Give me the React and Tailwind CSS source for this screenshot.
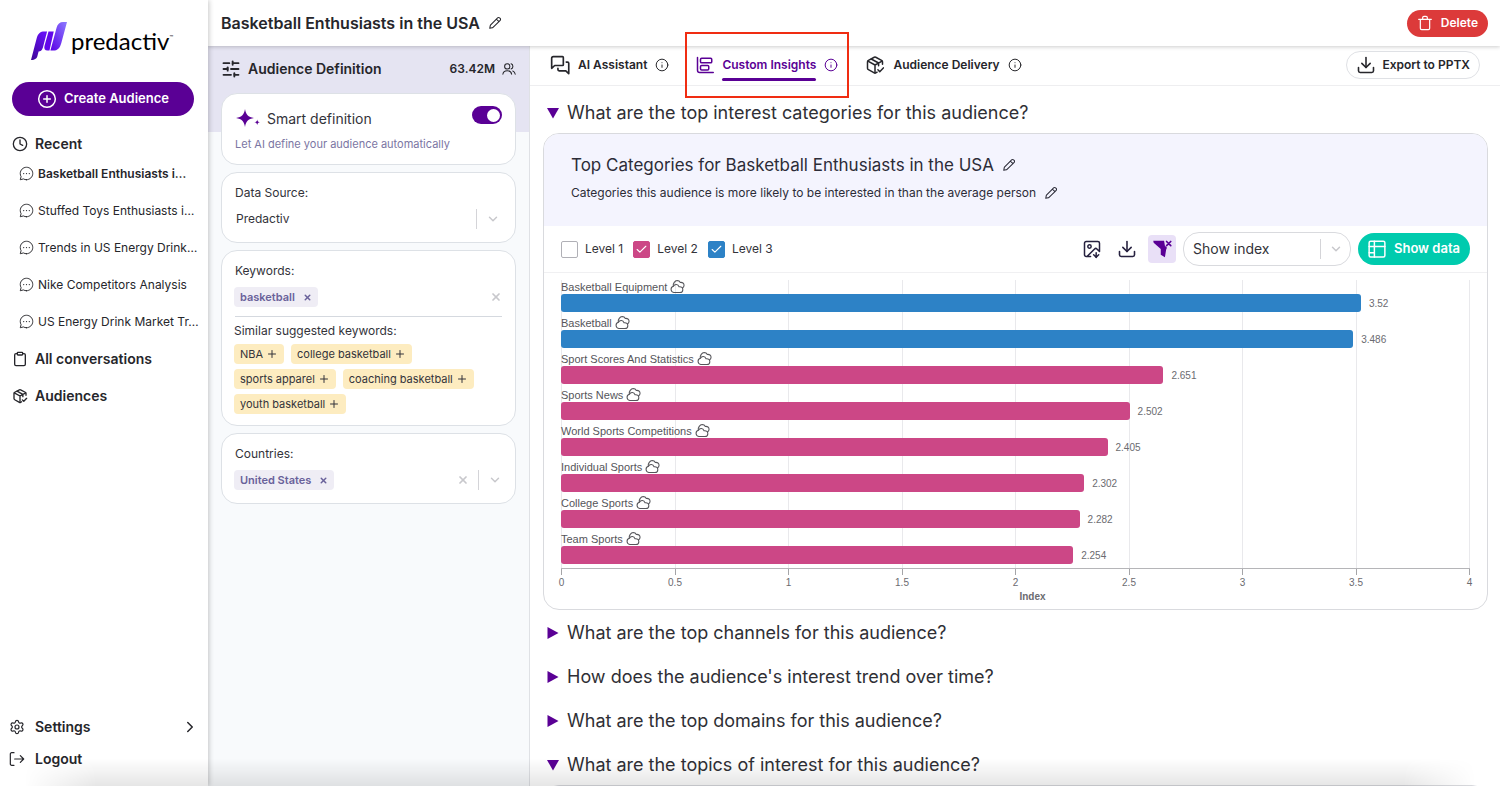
import { useState } from "react";
import {
  Clock, Clipboard, ChevronRight, ChevronDown, SlidersHorizontal, Info,
  Download, ImageDown, CirclePlus, Plus, X, Check, Settings,
} from "lucide-react";

function Svg({ className, children, sw = 1.5 }) {
  return (
    <svg viewBox="0 0 24 24" fill="none" stroke="currentColor" strokeWidth={sw} strokeLinecap="round" strokeLinejoin="round" className={className} aria-hidden="true">
      {children}
    </svg>
  );
}

const Pencil = ({ className }) => (
  <Svg className={className} sw={1.8}>
    <path d="M14.4 5.2l2-2a2.4 2.4 0 0 1 3.4 0l1 1a2.4 2.4 0 0 1 0 3.4l-2 2M14.4 5.2L4.6 15.4a3 3 0 0 0-.8 1.5L3 21l4.1-.8a3 3 0 0 0 1.5-.8L18.8 9.6M14.4 5.2l4.4 4.4" />
  </Svg>
);

const ChatBubble = ({ className }) => (
  <Svg className={className}>
    <path d="M12 22c5.523 0 10-4.477 10-10S17.523 2 12 2 2 6.477 2 12c0 1.821.487 3.53 1.338 5L2 22l5-1.338A9.955 9.955 0 0 0 12 22z" />
    <path d="M7.5 12h.01M12 12h.01M16.5 12h.01" strokeWidth="2" />
  </Svg>
);

const People = ({ className }) => (
  <Svg className={className} sw={1.8}>
    <circle cx="9" cy="7.500" r="4.500" />
    <path d="M1.500 21c.5-4 3.500-6 7.500-6s7 2 7.500 6M15.500 3.200a4.500 4.500 0 0 1 0 8.600M18.500 15.300c2.500 1 3.800 3 4.200 5.700" />
  </Svg>
);

const PackageCheck = ({ className, sw = 1.8 }) => (
  <Svg className={className} sw={sw}>
    <path d="M21 11V8.2a2 2 0 0 0-1.1-1.8l-7-3.7a2 2 0 0 0-1.8 0l-7 3.7A2 2 0 0 0 3 8.2v7.6a2 2 0 0 0 1.1 1.8l7 3.9a2 2 0 0 0 1.8 0l1.6-.9" />
    <path d="M3.5 7.3L12 12l8.5-4.7M12 12v9.5M7.5 4.8l8.8 4.8V13" />
    <path d="M15.5 17.8l2.2 2.2 4.3-4.5" />
  </Svg>
);

const Chats = ({ className }) => (
  <Svg className={className} sw={2}>
    <path d="M15 2H4a2 2 0 0 0-2 2v12l3.6-3.4H15a1 1 0 0 0 1-1V3a1 1 0 0 0-1-1z" />
    <path d="M19.5 8.5H21a1.5 1.5 0 0 1 1.5 1.5v12.5L19 19h-8a1.500 1.500 0 0 1-1.500-1.500V16" />
  </Svg>
);

const InsightBars = ({ className }) => (
  <Svg className={className} sw={2}>
    <path d="M2 2v17a3 3 0 0 0 3 3h18" />
    <rect x="6" y="3" width="15" height="6" rx="1.500" />
    <rect x="6" y="12.500" width="11" height="6" rx="1.500" />
  </Svg>
);

const LogoutIcon = ({ className }) => (
  <Svg className={className} sw={1.8}>
    <path d="M7.500 21.500H4a2 2 0 0 1-2-2v-15a2 2 0 0 1 2-2h3.500M8.500 12H22M17 7l5 5-5 5" />
  </Svg>
);

const Trash = ({ className }) => (
  <Svg className={className} sw={1.8}>
    <path d="M2.500 6.500h19M5 6.500V20a2 2 0 0 0 2 2h10a2 2 0 0 0 2-2V6.500M8.500 6V4a2 2 0 0 1 2-2h3a2 2 0 0 1 2 2v2" />
  </Svg>
);

const TableIcon = ({ className }) => (
  <Svg className={className} sw={2}>
    <rect x="1.500" y="1.500" width="21" height="21" rx="2" />
    <path d="M1.500 8.500h21M1.500 17h7M8.500 1.500v21" />
  </Svg>
);

const Clouds = ({ className }) => (
  <Svg className={className} sw={1.7}>
    <path d="M6 21.500a5 5 0 0 1-.5-9.800C7.500 7.500 13 8 14.500 12.500c4-.5 6 1.500 6 4.500s-2 4.500-4.500 4.500z" />
    <path d="M5.200 11.500C4.500 7 8 2.800 11.500 2.500c2.500 0 4 1 5 3 3.500-.5 6 1.500 6 4.500 0 2-1 3.500-2.500 4.500" />
  </Svg>
);

const FilterX = ({ className }) => (
  <svg viewBox="0 0 24 24" className={className} aria-hidden="true">
    <path d="M1.500 2H14.500L15.500 8L18 10.500L17 12.500L15.500 22L10.500 19V12L2 4.500Z" fill="currentColor" />
    <path d="M17.500 3l5 5M22.500 3l-5 5" stroke="currentColor" strokeWidth="2" strokeLinecap="round" />
  </svg>
);

const Sparkle = ({ className }) => (
  <svg viewBox="0 0 24 20" className={className} fill="currentColor" aria-hidden="true">
    <path d="M9 0c.9 5.500 3 8 9 9-6 1-8.100 3.500-9 9-.9-5.500-3-8-9-9 6-1 8.100-3.500 9-9z" />
    <path d="M21.200 10.500c.3 1.800 1 2.500 2.800 2.800-1.800.3-2.500 1-2.800 2.800-.3-1.800-1-2.500-2.800-2.800 1.800-.3 2.500-1 2.800-2.800z" />
  </svg>
);

const Logo = () => (
  <a href="#home" className="mx-auto flex h-10 w-[146px] items-center gap-1 text-black">
    <svg viewBox="0 0 38 40" className="h-10 w-9 shrink-0" aria-hidden="true">
      <defs>
        <linearGradient id="markLeft" x1="0" y1="1" x2="0.6" y2="0">
          <stop offset="0" stopColor="#3d0596" />
          <stop offset="1" stopColor="#6610f2" />
        </linearGradient>
        <linearGradient id="markRight" x1="0" y1="1" x2="1" y2="0">
          <stop offset="0" stopColor="#5a00e6" />
          <stop offset="1" stopColor="#8d7cff" />
        </linearGradient>
      </defs>
      <path d="M0 40L6 17c1.500-5 4-7 8-7h3l-4.500 17c-1 3-2.500 4-4.500 4l-1 4c-.8 3.500-2.500 5-7 5z" fill="url(#markLeft)" />
      <path d="M18.500 10h5.500l-4.500 20h-2c-3 0-4-2-3.200-5z" fill="#6207ea" />
      <path d="M27 6c1-4 3.500-6 7-6h4l-6 22c-1.500 5.500-4 8-8.500 8h-3z" fill="url(#markRight)" />
    </svg>
    <span className="font-['Lato'] text-2xl leading-8 text-black">predactiv</span>
    <span className="-ml-1 mb-2 self-center text-[6px]">™</span>
  </a>
);

const recents = [
  "Basketball Enthusiasts i…",
  "Stuffed Toys Enthusiasts i…",
  "Trends in US Energy Drink…",
  "Nike Competitors Analysis",
  "US Energy Drink Market Tr…",
];

function Sidebar() {
  return (
    <aside className="z-20 flex w-52 shrink-0 flex-col bg-white pt-[21px] pb-[11px] shadow-[1px_0_5px_rgba(0,0,0,0.22)]">
      <Logo />
      <button className="mt-[21px] mr-[14px] ml-3 flex h-[34px] items-center justify-center gap-[7px] rounded-full bg-[#5a0095] text-[13px] font-semibold text-white">
        <CirclePlus className="size-5" strokeWidth={1.8} />
        Create Audience
      </button>
      <nav className="mt-[9px] flex flex-col text-[#26262b]">
        <h2 className="flex h-[37px] items-center gap-[7px] pl-3 text-sm font-semibold">
          <Clock className="size-4" strokeWidth={2} /> Recent
        </h2>
        {recents.map((r, i) => (
          <a key={r} href="#chat" className={`flex h-[37px] items-center gap-1 pb-[14px] pl-[19px] text-xs whitespace-nowrap ${i === 0 ? "font-semibold" : ""}`}>
            <ChatBubble className="size-[15px] shrink-0" />
            {r}
          </a>
        ))}
        <a href="#conversations" className="-mt-[7px] flex h-[37px] items-center gap-[7px] pl-3 text-sm font-semibold">
          <Clipboard className="size-4" /> All conversations
        </a>
        <a href="#audiences" className="flex h-[37px] items-center gap-[7px] pl-3 text-sm font-semibold">
          <PackageCheck className="size-4" sw={2} /> Audiences
        </a>
      </nav>
      <div className="mt-auto flex flex-col text-sm font-semibold text-[#26262b]">
        <a href="#settings" className="flex h-8 items-center gap-[10px] pr-[9px] pl-[9px]">
          <Settings className="size-4" strokeWidth={1.8} /> Settings
          <ChevronRight className="ml-auto size-[18px]" />
        </a>
        <a href="#logout" className="flex h-8 items-center gap-[10px] pl-[9px]">
          <LogoutIcon className="size-4" /> Logout
        </a>
      </div>
    </aside>
  );
}

const card = "rounded-2xl border border-[#dde1e6] bg-white px-[13px]";

function Tag({ children }) {
  return (
    <span className="-ml-px flex h-5 items-center gap-2 rounded-sm bg-[#efedf5] px-[6px] text-[11px] font-semibold text-[#69619a]">
      {children}
      <button aria-label={`Remove ${children}`}><X className="size-[9px]" strokeWidth={4} /></button>
    </span>
  );
}

const suggestions = ["NBA", "college basketball", "sports apparel", "coaching basketball", "youth basketball"];

function Definition() {
  const [smart, setSmart] = useState(true);
  return (
    <section className="w-[322px] shrink-0 border-r border-[#dfe1e5] bg-[#f8fafc]">
      <div className="bg-[linear-gradient(#e5e4f2_86px,transparent_86px)] px-[13px]">
        <div className="flex h-[47px] items-center pb-px text-[#26262b]">
          <SlidersHorizontal className="mr-[7px] size-5" strokeWidth={2.2} />
          <h2 className="text-sm font-semibold">Audience Definition</h2>
          <span className="ml-auto text-xs font-semibold">63.42M</span>
          <People className="ml-[7px] size-[14px]" />
        </div>
        <div className="flex flex-col gap-[7px]">
          <div className={`${card} h-[72px] pt-3`}>
            <div className="flex h-[26px] items-center">
              <Sparkle className="ml-[1px] h-5 w-6 text-[#5a0095]" />
              <span className="ml-[7px] text-sm leading-7 text-[#33333a]">Smart definition</span>
              <label className="relative mb-2 ml-auto flex h-[18px] w-[30px] items-center justify-end rounded-full bg-[#5a0095] px-[2px]">
                <input type="checkbox" role="switch" aria-label="Smart definition" checked={smart} onChange={() => setSmart(!smart)} className="absolute inset-0 cursor-pointer appearance-none" />
                <span className="size-[13px] rounded-full bg-white" />
              </label>
            </div>
            <p className="mt-1 text-[11px] leading-4 text-[#7b76a3]">Let AI define your audience automatically</p>
          </div>
          <div className={`${card} h-[71px] pt-[10px] text-[#33333a]`}>
            <label htmlFor="source" className="block text-xs leading-5">Data Source:</label>
            <div className="relative mt-[6px] flex items-center">
              <select id="source" className="w-full appearance-none bg-transparent pl-px text-xs leading-5">
                <option>Predactiv</option>
              </select>
              <span className="pointer-events-none absolute right-[2px] flex items-center gap-[9px] text-[#c8c8cc]">
                <span className="h-5 w-px bg-[#d4d4d8]" />
                <ChevronDown className="size-[14px]" strokeWidth={2.5} />
              </span>
            </div>
          </div>
          <div className={`${card} pt-[10px] pb-[11px] text-[#33333a]`}>
            <h3 className="text-xs leading-5">Keywords:</h3>
            <div className="flex h-9 items-center justify-between border-b border-[#d5d9df] pb-[3px] text-[#c8c8cc]">
              <Tag>basketball</Tag>
              <button aria-label="Clear keywords"><X className="size-3" strokeWidth={3.5} /></button>
            </div>
            <h3 className="-ml-px mt-[4px] text-xs leading-5">Similar suggested keywords:</h3>
            <div className="-ml-px mt-[3px] flex flex-wrap gap-x-[7px] gap-y-[5px]">
              {suggestions.map((s) => (
                <button key={s} className="flex h-5 items-center gap-[3px] rounded bg-[#fdecc0] px-[6px] text-[11px] text-[#33333a]">
                  {s}
                  <Plus className="size-3" strokeWidth={2} />
                </button>
              ))}
            </div>
          </div>
          <div className={`${card} h-[71px] pt-[10px] text-[#33333a]`}>
            <h3 className="text-xs leading-5">Countries:</h3>
            <div className="mt-[6px] flex items-center text-[#c8c8cc]">
              <Tag>United States</Tag>
              <button aria-label="Clear countries" className="ml-auto"><X className="size-3" strokeWidth={3.500} /></button>
              <span className="mx-[9px] h-5 w-px bg-[#d4d4d8]" />
              <button aria-label="Choose countries"><ChevronDown className="size-[14px]" strokeWidth={2.500} /></button>
            </div>
          </div>
        </div>
      </div>
    </section>
  );
}

const rows = [
  ["Basketball Equipment", 3.52, 3],
  ["Basketball", 3.486, 3],
  ["Sport Scores And Statistics", 2.651, 2],
  ["Sports News", 2.502, 2],
  ["World Sports Competitions", 2.405, 2],
  ["Individual Sports", 2.302, 2],
  ["College Sports", 2.282, 2],
  ["Team Sports", 2.254, 2],
];
const ticks = ["0", "0.5", "1", "1.5", "2", "2.5", "3", "3.5", "4"];

function Chart() {
  return (
    <div className="pt-[7px] pr-[17px] pb-[7px] pl-[17px] font-['Liberation_Sans',sans-serif] text-[#55555a]">
      <div className="relative border-b border-[#b5b5b8]">
        <div className="absolute inset-0 flex justify-between" aria-hidden="true">
          {ticks.map((t) => <span key={t} className="w-px bg-[#e9e9ec]" />)}
        </div>
        <ul className="relative">
          {rows.map(([name, value, level]) => (
            <li key={name} className="h-9">
              <div className="flex h-[14px] items-center gap-[3px] text-[11px]">
                {name}
                <Clouds className="mb-[2px] size-[15px]" />
              </div>
              <div className="flex items-center">
                <span className={`h-[18px] rounded-[3px] ${level === 3 ? "bg-[#2d82c6]" : "bg-[#cc4786]"}`} style={{ width: `${(value / 4) * 100}%` }} />
                <span className="ml-2 text-[10px] text-[#6b6b70]">{value}</span>
              </div>
            </li>
          ))}
        </ul>
      </div>
      <div className="flex justify-between text-[10px] text-[#6b6b70]">
        {ticks.map((t) => (
          <span key={t} className="flex w-px flex-col items-center">
            <span className="h-[6px] w-px bg-[#a5a5a8]" />
            <span className="leading-4">{t}</span>
          </span>
        ))}
      </div>
      <p className="pl-[34px] text-center text-[10px] leading-[11px] font-bold text-[#6b6b70]">Index</p>
    </div>
  );
}

function Level({ n, color, on }) {
  const [checked, setChecked] = useState(on);
  return (
    <label className="flex items-center gap-[7px] text-xs">
      <span className="relative flex size-[17px] items-center justify-center">
        <input type="checkbox" checked={checked} onChange={() => setChecked(!checked)} className={`absolute inset-0 appearance-none rounded-xs border ${checked ? color : "border-[#b0b0b6] bg-white"}`} />
        {checked && <Check className="pointer-events-none relative size-[13px] text-white" />}
      </span>
      Level {n}
    </label>
  );
}

function Question({ children, open }) {
  return (
    <button aria-expanded={!!open} className="flex items-center gap-2 text-left text-lg leading-6 text-[#2f2f35]">
      <svg viewBox="0 0 12 12" className="size-3 shrink-0 fill-[#5a0095]" aria-hidden="true">
        {open ? <path d="M0 1h12L6 11.500z" /> : <path d="M0.500 0L11.500 6L0.500 12z" />}
      </svg>
      {children}
    </button>
  );
}

function Insights() {
  return (
    <main className="flex min-w-0 flex-1 flex-col bg-white">
      <div className="flex h-10 shrink-0 items-center border-b border-[#eeeef0] pr-5 pb-px pl-5 text-xs font-semibold text-[#26262b]">
        <nav className="flex items-center">
          <a href="#assistant" className="flex items-center gap-2">
            <Chats className="size-5" /> AI Assistant <Info className="size-[14px]" strokeWidth={1.700} />
          </a>
          <a href="#insights" className="relative ml-[27px] flex items-center gap-2 text-[#5a0095]">
            <InsightBars className="size-[18px]" />
            <span className="relative">
              Custom Insights
              <span className="absolute inset-x-0 -bottom-2 h-[3px] rounded-full bg-[#5a0095]" />
            </span>
            <Info className="size-[14px]" strokeWidth={1.700} />
            <span className="pointer-events-none absolute -inset-x-[11px] -top-6 z-20 h-[66px] border-2 border-[#f02d12]" />
          </a>
          <a href="#delivery" className="ml-[27px] flex items-center gap-2">
            <PackageCheck className="size-5" /> Audience Delivery <Info className="size-[14px]" strokeWidth={1.700} />
          </a>
        </nav>
        <button className="ml-auto flex h-7 items-center gap-[6px] rounded-full border border-[#dfe1e5] px-[9px]">
          <Download className="size-5" strokeWidth={1.900} /> Export to PPTX
        </button>
      </div>
      <div className="flex min-h-0 flex-1 flex-col overflow-hidden pt-[15px] pr-3 pl-[13px]">
        <div className="pl-1"><Question open>What are the top interest categories for this audience?</Question></div>
        <article className="mt-2 shrink-0 overflow-hidden rounded-2xl border border-[#d9dade]">
          <header className="bg-[#f4f4fe] px-[27px] pt-[19px] pb-[23px] text-[#2c2c38]">
            <h3 className="flex items-center gap-2 text-[17px] leading-6">
              Top Categories for Basketball Enthusiasts in the USA <Pencil className="size-[14px]" />
            </h3>
            <p className="mt-[6px] flex items-center gap-2 text-xs leading-5">
              Categories this audience is more likely to be interested in than the average person <Pencil className="size-[14px]" />
            </p>
          </header>
          <div className="flex h-[47px] items-center border-b border-[#f0f0f2] px-[17px] text-[#33333a]">
            <div className="flex items-center gap-[10px]">
              <Level n={1} on={false} />
              <Level n={2} on color="border-[#cc4786] bg-[#cc4786]" />
              <Level n={3} on color="border-[#2d82c6] bg-[#2d82c6]" />
            </div>
            <div className="ml-auto flex items-center text-[#26213f]">
              <button aria-label="Save image"><ImageDown className="size-5" strokeWidth={1.800} /></button>
              <button aria-label="Download" className="ml-[15px]"><Download className="size-5" strokeWidth={1.900} /></button>
              <button aria-label="Clear filters" className="ml-[11px] flex size-7 items-center justify-center rounded bg-[#e9e0f7] text-[#5a0095]"><FilterX className="size-5" /></button>
              <span className="relative ml-[7px] flex items-center">
                <select aria-label="Metric" className="h-[34px] w-[168px] appearance-none rounded-2xl border border-[#d9dade] bg-white pl-[9px] text-sm text-[#33333a]">
                  <option>Show index</option>
                </select>
                <span className="pointer-events-none absolute right-2 flex items-center gap-2 text-[#c8c8cc]">
                  <span className="h-5 w-px bg-[#d4d4d8]" />
                  <ChevronDown className="size-[14px]" strokeWidth={2.500} />
                </span>
              </span>
              <button className="ml-[7px] flex h-8 items-center gap-2 rounded-full bg-[#00cbae] px-[10px] text-[13px] font-semibold text-white">
                <TableIcon className="size-[18px]" /> Show data
              </button>
            </div>
          </div>
          <Chart />
        </article>
        <div className="mt-[11px] flex flex-col gap-5 pl-1">
          <Question>What are the top channels for this audience?</Question>
          <Question>How does the audience's interest trend over time?</Question>
          <Question>What are the top domains for this audience?</Question>
          <Question open>What are the topics of interest for this audience?</Question>
        </div>
        <div className="mt-2 h-10 shrink-0 rounded-t-2xl border border-[#d9dade] bg-[#f4f4fe]" />
      </div>
    </main>
  );
}

export default function App() {
  return (
    <div className="relative flex h-screen overflow-hidden bg-white font-['Inter',sans-serif]">
      <Sidebar />
      <div className="flex min-w-0 flex-1 flex-col">
        <header className="z-10 flex h-[46px] shrink-0 items-center bg-white pr-3 pl-[13px] text-[#26262b] shadow-[0_1px_4px_rgba(0,0,0,0.2)]">
          <h1 className="text-base font-semibold">Basketball Enthusiasts in the USA</h1>
          <button aria-label="Rename audience" className="ml-2"><Pencil className="size-[14px]" /></button>
          <button className="ml-auto flex h-[27px] items-center gap-2 rounded-full bg-[#dc3a3a] px-[10px] text-xs font-semibold text-white">
            <Trash className="size-4" /> Delete
          </button>
        </header>
        <div className="flex min-h-0 flex-1">
          <Definition />
          <Insights />
        </div>
      </div>
      <div className="pointer-events-none absolute inset-x-6 bottom-0 z-30 h-7 bg-linear-to-t from-black/10 to-transparent mask-x-from-95% mask-x-to-100%" />
    </div>
  );
}
